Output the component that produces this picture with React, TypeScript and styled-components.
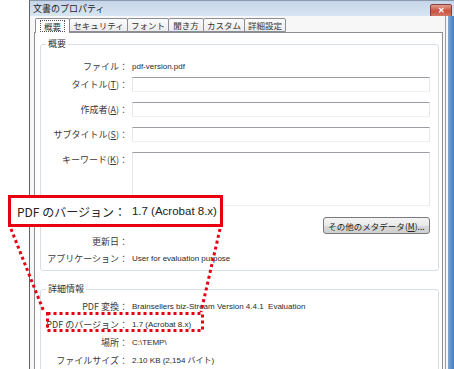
import React from "react";
import styled, { createGlobalStyle } from "styled-components";

const GlobalStyle = createGlobalStyle`
  html, body {
    margin: 0;
    padding: 0;
    background: #ffffff;
  }
  body {
    font-family: "Liberation Sans", "Noto Sans CJK JP", sans-serif;
  }
`;

const jp = `"Noto Sans CJK JP", "Liberation Sans", sans-serif`;
const latin = `"Liberation Sans", "Noto Sans CJK JP", sans-serif`;
const red = "#e60012";

const Page = styled.div`
  position: relative;
  width: 454px;
  height: 369px;
  overflow: hidden;
  background: #ffffff;
  display: flex;
`;

const Window = styled.div`
  margin-left: 29px;
  width: 425px;
  height: 400px;
  display: flex;
  flex-direction: column;
  border-left: 1px solid #5f6368;
  border-top: 1px solid #8a9bb0;
  background: #f3f3f3;
`;

const TitleBar = styled.div`
  height: 15px;
  display: flex;
  align-items: center;
  justify-content: space-between;
  padding: 0 2px 0 3px;
  background: linear-gradient(#c6d6e9, #d9e5f2);
`;

const TitleText = styled.span`
  font-family: ${jp};
  font-size: 9px;
  color: #1b1b1b;
`;

const CloseButton = styled.div`
  width: 20px;
  height: 11px;
  margin-top: 4px;
  border: 1px solid #8b3c3c;
  border-radius: 2px;
  background: linear-gradient(#e0a08f, #c9503f 55%, #d27a66);
  display: flex;
  align-items: center;
  justify-content: center;
  color: #ffffff;
  font-family: ${latin};
  font-size: 8px;
  font-weight: bold;
  line-height: 1;
`;

const Frame = styled.div`
  flex: 1;
  display: flex;
`;

const Client = styled.div`
  flex: 1;
  display: flex;
  flex-direction: column;
  background: #f7f7f7;
`;

const RightEdge = styled.div`
  width: 8px;
  border-left: 1px solid #9a9a9a;
  background: linear-gradient(90deg, #f4f6f9 0 2px, #7fa6d2 2px, #3f7fc2);
`;

const TabStrip = styled.div`
  height: 16px;
  display: flex;
  align-items: flex-end;
  padding-left: 5px;
  position: relative;
  z-index: 1;
`;

const Tab = styled.div<{ $w: number; $active?: boolean }>`
  width: ${(p) => p.$w}px;
  height: ${(p) => (p.$active ? 15 : 14)}px;
  margin-right: -1px;
  margin-bottom: ${(p) => (p.$active ? -1 : 0)}px;
  box-sizing: border-box;
  border: 1px solid #8c8e94;
  border-bottom: ${(p) => (p.$active ? "none" : "1px solid #8c8e94")};
  border-radius: 2px 2px 0 0;
  background: ${(p) => (p.$active ? "#ffffff" : "linear-gradient(#fbfbfb, #ececec)")};
  display: flex;
  align-items: center;
  justify-content: center;
  font-family: ${jp};
  font-size: 8.5px;
  color: #333333;
`;

const FocusLabel = styled.span`
  padding: 0 3px;
  outline: 1px dotted #555555;
  line-height: 10px;
`;

const Panel = styled.div`
  flex: 1;
  margin: 0 2px 0 4px;
  padding-top: 5px;
  background: #ffffff;
  border: 1px solid #8c8e94;
  display: flex;
  flex-direction: column;
`;

const Group = styled.fieldset<{ $top?: number }>`
  margin: ${(p) => p.$top ?? 0}px 3px 0 5px;
  padding: 0 8px 2px 0;
  border: 1px solid #d8dfe4;
  border-radius: 3px;
  min-width: 0;
`;

const GroupTitle = styled.legend`
  margin-left: 5px;
  padding: 0 2px;
  font-family: ${jp};
  font-size: 9px;
  line-height: 12px;
  color: #333333;
`;

const Row = styled.div<{ $h: number; $mt?: number; $top?: boolean }>`
  height: ${(p) => p.$h}px;
  margin-top: ${(p) => p.$mt ?? 0}px;
  display: grid;
  grid-template-columns: 87px 1fr;
  column-gap: 4px;
  align-items: ${(p) => (p.$top ? "start" : "center")};
`;

const Label = styled.span<{ $pt?: number }>`
  padding-top: ${(p) => p.$pt ?? 0}px;
  text-align: right;
  white-space: nowrap;
  font-family: ${jp};
  font-size: 9px;
  line-height: 12px;
  color: #3a3a3a;
`;

const Value = styled.span`
  white-space: nowrap;
  font-family: ${latin};
  font-size: 8px;
  line-height: 12px;
  color: #2a2a2a;
`;

const TextBox = styled.div<{ $h: number }>`
  height: ${(p) => p.$h}px;
  margin-top: 1px;
  box-sizing: border-box;
  background: #ffffff;
  border: 1px solid #e3e6ea;
  border-top-color: #9a9da3;
  border-bottom-color: #eef1f4;
`;

const ButtonRow = styled.div`
  margin-top: 10px;
  display: flex;
  justify-content: flex-end;
`;

const Button = styled.div`
  width: 107px;
  height: 17px;
  box-sizing: border-box;
  border: 1px solid #7a7a7a;
  border-radius: 3px;
  background: linear-gradient(#f4f4f4, #e9e9e9 50%, #d9d9d9 51%, #cfcfcf);
  display: flex;
  align-items: center;
  justify-content: center;
  font-family: ${jp};
  font-size: 8.5px;
  color: #222222;
`;

const Callout = styled.div`
  position: absolute;
  left: 8px;
  top: 195px;
  width: 215px;
  height: 32px;
  box-sizing: border-box;
  border: 3px solid ${red};
  background: #ffffff;
  display: flex;
  align-items: center;
  gap: 6px;
  padding-left: 6px;
`;

const CalloutLabel = styled.span`
  font-family: ${jp};
  font-size: 12px;
  color: #222222;
  white-space: nowrap;
`;

const CalloutValue = styled.span`
  font-family: ${latin};
  font-size: 11.5px;
  color: #222222;
  white-space: nowrap;
`;

const Annotations = styled.svg`
  position: absolute;
  left: 0;
  top: 0;
  pointer-events: none;
`;

const Key: React.FC<{ k: string }> = ({ k }) => (
  <>
    (<u>{k}</u>)
  </>
);

const tabs = [
  { name: "概要", w: 35 },
  { name: "セキュリティ", w: 59 },
  { name: "フォント", w: 42 },
  { name: "聞き方", w: 36 },
  { name: "カスタム", w: 42 },
  { name: "詳細設定", w: 42 },
];

const details = [
  { label: "PDF 変換：", value: "Brainsellers biz-Stream Version 4.4.1\u00a0\u00a0Evaluation" },
  { label: "PDF のバージョン：", value: "1.7 (Acrobat 8.x)" },
  { label: "場所：", value: "C:\\TEMP\\" },
  { label: "ファイルサイズ：", value: "2.10 KB (2,154 バイト)" },
];

const App: React.FC = () => {
  return (
    <Page>
      <GlobalStyle />
      <Window>
        <TitleBar>
          <TitleText>文書のプロパティ</TitleText>
          <CloseButton>✕</CloseButton>
        </TitleBar>
        <Frame>
          <Client>
            <TabStrip>
              {tabs.map((t, i) => (
                <Tab key={t.name} $w={t.w} $active={i === 0}>
                  {i === 0 ? <FocusLabel>{t.name}</FocusLabel> : t.name}
                </Tab>
              ))}
            </TabStrip>
            <Panel>
              <Group>
                <GroupTitle>概要</GroupTitle>
                <Row $h={18} $mt={8}>
                  <Label>ファイル：</Label>
                  <Value>pdf-version.pdf</Value>
                </Row>
                <Row $h={25} $top>
                  <Label $pt={3}>
                    タイトル<Key k="T" />：
                  </Label>
                  <TextBox $h={15} />
                </Row>
                <Row $h={25} $top>
                  <Label $pt={3}>
                    作成者<Key k="A" />：
                  </Label>
                  <TextBox $h={15} />
                </Row>
                <Row $h={25} $top>
                  <Label $pt={3}>
                    サブタイトル<Key k="S" />：
                  </Label>
                  <TextBox $h={15} />
                </Row>
                <Row $h={56} $top>
                  <Label $pt={3}>
                    キーワード<Key k="K" />：
                  </Label>
                  <TextBox $h={54} />
                </Row>
                <ButtonRow>
                  <Button>
                    その他のメタデータ<Key k="M" />...
                  </Button>
                </ButtonRow>
                <Row $h={16}>
                  <Label>更新日：</Label>
                  <Value />
                </Row>
                <Row $h={18}>
                  <Label>アプリケーション：</Label>
                  <Value>User for evaluation purpose</Value>
                </Row>
              </Group>
              <Group $top={12}>
                <GroupTitle>詳細情報</GroupTitle>
                {details.map((d, i) => (
                  <Row key={d.label} $h={18} $mt={i === 0 ? 3 : 0}>
                    <Label>{d.label}</Label>
                    <Value>{d.value}</Value>
                  </Row>
                ))}
              </Group>
            </Panel>
          </Client>
          <RightEdge />
        </Frame>
      </Window>

      <Callout>
        <CalloutLabel>PDF のバージョン：</CalloutLabel>
        <CalloutValue>1.7 (Acrobat 8.x)</CalloutValue>
      </Callout>

      <Annotations width={454} height={369} viewBox="0 0 454 369">
        <g fill="none" stroke={red} strokeWidth={3} strokeDasharray="3 3">
          <line x1={11} y1={229} x2={44} y2={312} />
          <line x1={220} y1={229} x2={201} y2={312} />
          <rect x={47.5} y={313.5} width={155} height={17} />
        </g>
      </Annotations>
    </Page>
  );
};

export default App;
